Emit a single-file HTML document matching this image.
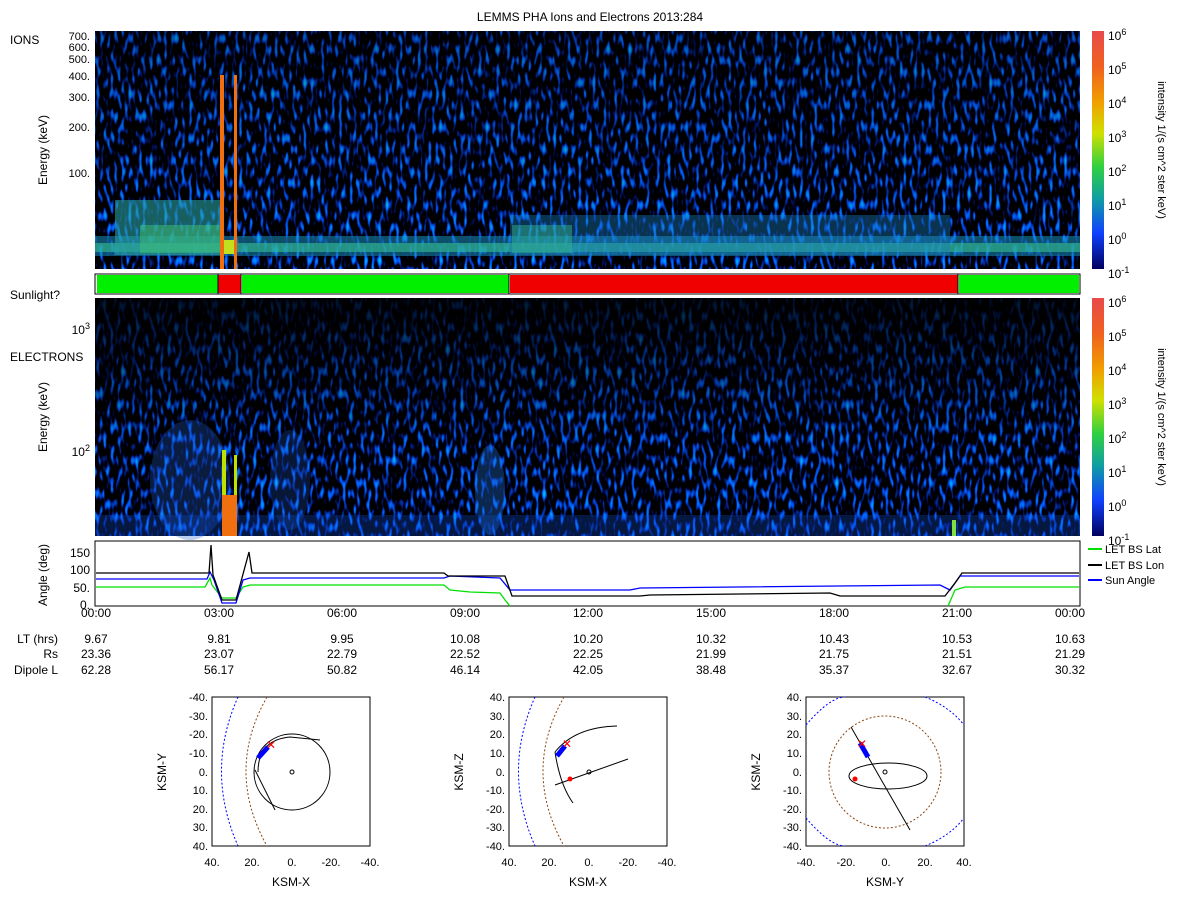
<!DOCTYPE html><html><head><style>
body{margin:0;background:#fff;width:1200px;height:900px;overflow:hidden;font-family:"Liberation Sans",sans-serif}
svg text{font-family:"Liberation Sans",sans-serif;fill:#000}
</style></head><body>
<svg width="1200" height="900" xmlns="http://www.w3.org/2000/svg">
<defs>
<filter id="nz" x="0" y="0" width="100%" height="100%" color-interpolation-filters="sRGB">
<feTurbulence type="fractalNoise" baseFrequency="0.28 0.09" numOctaves="1" seed="3"/>
<feColorMatrix type="matrix" values="0 0 0 0 0  2.5 0 0 0 -1.3  6 0 0 0 -2.95  0 0 0 0 1"/>
</filter>
<filter id="nz2" x="0" y="0" width="100%" height="100%" color-interpolation-filters="sRGB">
<feTurbulence type="fractalNoise" baseFrequency="0.28 0.09" numOctaves="1" seed="7"/>
<feColorMatrix type="matrix" values="0 0 0 0 0  2.5 0 0 0 -1.3  6 0 0 0 -2.95  0 0 0 0 1"/>
</filter>
<linearGradient id="cb" x1="0" y1="0" x2="0" y2="1">
<stop offset="0" stop-color="#e84a4a"/><stop offset="0.15" stop-color="#f06020"/><stop offset="0.3" stop-color="#f0a000"/><stop offset="0.43" stop-color="#d0e000"/><stop offset="0.57" stop-color="#30d040"/><stop offset="0.7" stop-color="#10a0a0"/><stop offset="0.85" stop-color="#1040ff"/><stop offset="1" stop-color="#000060"/>
</linearGradient>
<linearGradient id="eb" x1="0" y1="0" x2="0" y2="1">
<stop offset="0" stop-color="#000" stop-opacity="0.85"/><stop offset="0.3" stop-color="#000" stop-opacity="0.45"/><stop offset="0.6" stop-color="#000" stop-opacity="0.1"/><stop offset="1" stop-color="#000" stop-opacity="0"/>
</linearGradient>
<linearGradient id="ib" x1="0" y1="0" x2="0" y2="1">
<stop offset="0" stop-color="#000" stop-opacity="0.3"/><stop offset="1" stop-color="#000" stop-opacity="0"/>
</linearGradient>
</defs>
<text x="590" y="21" font-size="12" text-anchor="middle">LEMMS PHA Ions and Electrons  2013:284</text>
<rect x="95" y="31" width="985" height="238" fill="#000"/>
<rect x="95" y="31" width="985" height="238" filter="url(#nz)"/>
<rect x="95" y="31" width="985" height="238" fill="url(#ib)"/>
<rect x="95" y="236" width="985" height="20" fill="#1890c0" opacity="0.55"/>
<rect x="95" y="243" width="985" height="9" fill="#30b090" opacity="0.7"/>
<rect x="115" y="200" width="105" height="55" fill="#28a0a0" opacity="0.6"/>
<rect x="140" y="225" width="80" height="28" fill="#40c070" opacity="0.5"/>
<rect x="510" y="215" width="440" height="40" fill="#1a80c0" opacity="0.4"/>
<rect x="512" y="225" width="60" height="28" fill="#30b090" opacity="0.5"/>
<rect x="220" y="75" width="4" height="194" fill="#f07010"/>
<rect x="234" y="75" width="3" height="194" fill="#f07010"/>
<rect x="224" y="240" width="10" height="14" fill="#c0e020"/>
<rect x="1092" y="31" width="12" height="238" fill="url(#cb)"/>
<rect x="95" y="274" width="985" height="20" fill="#fff" stroke="#000"/>
<rect x="97" y="275" width="121" height="18" fill="#00f000"/>
<rect x="218" y="275" width="23" height="18" fill="#f00000"/>
<rect x="242" y="275" width="267" height="18" fill="#00f000"/>
<rect x="510" y="275" width="448" height="18" fill="#f00000"/>
<rect x="959" y="275" width="120" height="18" fill="#00f000"/>
<line x1="218" y1="274" x2="218" y2="294" stroke="#000"/><line x1="241" y1="274" x2="241" y2="294" stroke="#000"/><line x1="509" y1="274" x2="509" y2="294" stroke="#000"/><line x1="958" y1="274" x2="958" y2="294" stroke="#000"/>
<rect x="95" y="298" width="985" height="238" fill="#000"/>
<rect x="95" y="298" width="985" height="238" filter="url(#nz2)"/>
<rect x="95" y="298" width="985" height="238" fill="url(#eb)"/>
<ellipse cx="190" cy="480" rx="40" ry="60" fill="#2060d0" opacity="0.3"/>
<ellipse cx="290" cy="480" rx="20" ry="50" fill="#2060d0" opacity="0.25"/>
<ellipse cx="490" cy="490" rx="15" ry="45" fill="#2070d0" opacity="0.35"/>
<rect x="95" y="515" width="985" height="21" fill="#1050d0" opacity="0.3"/>
<rect x="222" y="450" width="4" height="86" fill="#c0e000"/>
<rect x="234" y="455" width="3" height="81" fill="#c0e000"/>
<rect x="222" y="495" width="15" height="41" fill="#f07010"/>
<rect x="952" y="520" width="4" height="16" fill="#80e040"/>
<rect x="1092" y="298" width="12" height="238" fill="url(#cb)"/>
<g font-size="12">
<text x="1108" y="40">10<tspan font-size="9" dy="-5">6</tspan></text>
<text x="1108" y="74">10<tspan font-size="9" dy="-5">5</tspan></text>
<text x="1108" y="108">10<tspan font-size="9" dy="-5">4</tspan></text>
<text x="1108" y="142">10<tspan font-size="9" dy="-5">3</tspan></text>
<text x="1108" y="176">10<tspan font-size="9" dy="-5">2</tspan></text>
<text x="1108" y="210">10<tspan font-size="9" dy="-5">1</tspan></text>
<text x="1108" y="244">10<tspan font-size="9" dy="-5">0</tspan></text>
<text x="1108" y="278">10<tspan font-size="9" dy="-5">-1</tspan></text>
<text x="1108" y="307">10<tspan font-size="9" dy="-5">6</tspan></text>
<text x="1108" y="341">10<tspan font-size="9" dy="-5">5</tspan></text>
<text x="1108" y="375">10<tspan font-size="9" dy="-5">4</tspan></text>
<text x="1108" y="409">10<tspan font-size="9" dy="-5">3</tspan></text>
<text x="1108" y="443">10<tspan font-size="9" dy="-5">2</tspan></text>
<text x="1108" y="477">10<tspan font-size="9" dy="-5">1</tspan></text>
<text x="1108" y="511">10<tspan font-size="9" dy="-5">0</tspan></text>
<text x="1108" y="545">10<tspan font-size="9" dy="-5">-1</tspan></text>
</g>
<text transform="translate(1158,150) rotate(90)" font-size="11" text-anchor="middle">intensity 1/(s cm^2 ster keV)</text>
<text transform="translate(1158,417) rotate(90)" font-size="11" text-anchor="middle">intensity 1/(s cm^2 ster keV)</text>
<g font-size="12">
<text x="10" y="44">IONS</text>
<g font-size="11">
<text x="90" y="40" text-anchor="end">700.</text>
<text x="90" y="51" text-anchor="end">600.</text>
<text x="90" y="63" text-anchor="end">500.</text>
<text x="90" y="80" text-anchor="end">400.</text>
<text x="90" y="101" text-anchor="end">300.</text>
<text x="90" y="131" text-anchor="end">200.</text>
<text x="90" y="177" text-anchor="end">100.</text>
</g>
<text transform="translate(47,150) rotate(-90)" text-anchor="middle">Energy (keV)</text>
<text x="10" y="299">Sunlight?</text>
<text x="10" y="361">ELECTRONS</text>
<text x="90" y="334" text-anchor="end">10<tspan font-size="9" dy="-5">3</tspan></text>
<text x="90" y="456" text-anchor="end">10<tspan font-size="9" dy="-5">2</tspan></text>
<text transform="translate(47,417) rotate(-90)" text-anchor="middle">Energy (keV)</text>
</g>
<rect x="95" y="541" width="985" height="65" fill="#fff" stroke="#000"/>
<g font-size="12">
<text x="90" y="557" text-anchor="end">150</text>
<text x="90" y="574" text-anchor="end">100</text>
<text x="90" y="592" text-anchor="end">50.</text>
<text x="90" y="609" text-anchor="end">0.</text>
<text transform="translate(47,575) rotate(-90)" text-anchor="middle">Angle (deg)</text>
</g>
<g fill="none" stroke-width="1.3">
<polyline stroke="#00e000" points="96,587 205,587 210,578 212,585 222,598 236,598 243,587 250,585 444,585 450,590 470,592 500,593 505,600 510,606"/>
<polyline stroke="#00e000" points="948,606 955,590 965,587 1079,587"/>
<polyline stroke="#0000ff" points="96,579 207,579 210,572 214,580 222,603 236,603 243,580 250,578 444,578 450,576 500,578 510,590 630,590 640,588 940,585 950,590 960,576 1079,576"/>
<polyline stroke="#000" points="96,573 209,573 211,545 213,575 222,600 236,600 249,552 252,573 444,573 448,576 505,576 512,596 640,596 650,595 830,593 840,596 945,596 955,583 962,573 1079,573"/>
</g>
<line x1="1088" y1="549" x2="1102" y2="549" stroke="#00e000" stroke-width="2"/><text x="1105" y="553" font-size="11">LET BS Lat</text>
<line x1="1088" y1="565" x2="1102" y2="565" stroke="#000" stroke-width="2"/><text x="1105" y="569" font-size="11">LET BS Lon</text>
<line x1="1088" y1="580" x2="1102" y2="580" stroke="#00f" stroke-width="2"/><text x="1105" y="584" font-size="11">Sun Angle</text>
<g font-size="12" text-anchor="middle">
<text x="96" y="617">00:00</text><text x="219" y="617">03:00</text><text x="342" y="617">06:00</text><text x="465" y="617">09:00</text><text x="588" y="617">12:00</text><text x="711" y="617">15:00</text><text x="834" y="617">18:00</text><text x="957" y="617">21:00</text><text x="1070" y="617">00:00</text>
<text x="96" y="643">9.67</text><text x="219" y="643">9.81</text><text x="342" y="643">9.95</text><text x="465" y="643">10.08</text><text x="588" y="643">10.20</text><text x="711" y="643">10.32</text><text x="834" y="643">10.43</text><text x="957" y="643">10.53</text><text x="1070" y="643">10.63</text>
<text x="96" y="658">23.36</text><text x="219" y="658">23.07</text><text x="342" y="658">22.79</text><text x="465" y="658">22.52</text><text x="588" y="658">22.25</text><text x="711" y="658">21.99</text><text x="834" y="658">21.75</text><text x="957" y="658">21.51</text><text x="1070" y="658">21.29</text>
<text x="96" y="674">62.28</text><text x="219" y="674">56.17</text><text x="342" y="674">50.82</text><text x="465" y="674">46.14</text><text x="588" y="674">42.05</text><text x="711" y="674">38.48</text><text x="834" y="674">35.37</text><text x="957" y="674">32.67</text><text x="1070" y="674">30.32</text>
</g>
<g font-size="12" text-anchor="end">
<text x="58" y="643">LT (hrs)</text><text x="58" y="658">Rs</text><text x="58" y="674">Dipole L</text>
</g>
<g font-size="11">
<rect x="212" y="697" width="158" height="149" fill="#fff" stroke="#000"/>
<path d="M238,697 Q205,771 238,846" fill="none" stroke="#00f" stroke-dasharray="2,2"/>
<path d="M267,697 Q225,771 267,846" fill="none" stroke="#8b4513" stroke-dasharray="2,2"/>
<circle cx="292" cy="772" r="38" fill="none" stroke="#000"/>
<path d="M258,772 Q258,740 290,737 L320,740" fill="none" stroke="#000"/>
<path d="M255,770 L275,810" fill="none" stroke="#000"/>
<circle cx="292" cy="772" r="2" fill="none" stroke="#000"/>
<path d="M258,758 L268,747" stroke="#00f" stroke-width="5"/>
<text x="271" y="749" font-size="12" text-anchor="middle" style="fill:#f00">✕</text>
</g>
<g font-size="11" text-anchor="end">
<text x="208" y="701">-40.</text><text x="208" y="720">-30.</text><text x="208" y="738">-20.</text><text x="208" y="757">-10.</text><text x="208" y="776">0.</text><text x="208" y="794">10.</text><text x="208" y="813">20.</text><text x="208" y="831">30.</text><text x="208" y="850">40.</text>
<text x="505" y="701">40.</text><text x="505" y="720">30.</text><text x="505" y="738">20.</text><text x="505" y="757">10.</text><text x="505" y="776">0.</text><text x="505" y="794">-10.</text><text x="505" y="813">-20.</text><text x="505" y="831">-30.</text><text x="505" y="850">-40.</text>
<text x="802" y="701">40.</text><text x="802" y="720">30.</text><text x="802" y="738">20.</text><text x="802" y="757">10.</text><text x="802" y="776">0.</text><text x="802" y="794">-10.</text><text x="802" y="813">-20.</text><text x="802" y="831">-30.</text><text x="802" y="850">-40.</text>
</g>
<g font-size="11" text-anchor="middle">
<text x="212" y="866">40.</text><text x="252" y="866">20.</text><text x="292" y="866">0.</text><text x="331" y="866">-20.</text><text x="370" y="866">-40.</text>
<text x="509" y="866">40.</text><text x="549" y="866">20.</text><text x="589" y="866">0.</text><text x="628" y="866">-20.</text><text x="667" y="866">-40.</text>
<text x="806" y="866">-40.</text><text x="846" y="866">-20.</text><text x="886" y="866">0.</text><text x="925" y="866">20.</text><text x="964" y="866">40.</text>
<text x="291" y="886" font-size="12">KSM-X</text><text x="588" y="886" font-size="12">KSM-X</text><text x="885" y="886" font-size="12">KSM-Y</text>
</g>
<text transform="translate(166,772) rotate(-90)" font-size="12" text-anchor="middle">KSM-Y</text>
<text transform="translate(463,772) rotate(-90)" font-size="12" text-anchor="middle">KSM-Z</text>
<text transform="translate(760,772) rotate(-90)" font-size="12" text-anchor="middle">KSM-Z</text>
<rect x="509" y="697" width="158" height="149" fill="#fff" stroke="#000"/>
<path d="M535,697 Q502,771 535,846" fill="none" stroke="#00f" stroke-dasharray="2,2"/>
<path d="M564,697 Q522,771 564,846" fill="none" stroke="#8b4513" stroke-dasharray="2,2"/>
<path d="M555,752 Q575,727 617,726" fill="none" stroke="#000"/>
<path d="M555,785 L628,759" fill="none" stroke="#000"/>
<path d="M555,752 Q560,785 573,803" fill="none" stroke="#000"/>
<circle cx="589" cy="772" r="2" fill="none" stroke="#000"/>
<path d="M557,756 L565,746" stroke="#00f" stroke-width="5"/>
<text x="567" y="748" font-size="12" text-anchor="middle" style="fill:#f00">✕</text>
<circle cx="570" cy="779" r="2.5" fill="#f00"/>
<rect x="806" y="697" width="158" height="149" fill="#fff" stroke="#000"/>
<path d="M806,725 Q830,697 845,697 M925,697 Q950,707 964,725 M806,818 Q830,846 845,846 M925,846 Q950,836 964,818" fill="none" stroke="#00f" stroke-dasharray="2,2"/>
<circle cx="885" cy="772" r="56" fill="none" stroke="#8b4513" stroke-dasharray="2,2"/>
<ellipse cx="888" cy="776" rx="39" ry="13" fill="none" stroke="#000"/>
<path d="M851,727 L910,830" fill="none" stroke="#000"/>
<circle cx="885" cy="772" r="2" fill="none" stroke="#000"/>
<path d="M860,743 L868,757" stroke="#00f" stroke-width="5"/>
<text x="862" y="748" font-size="12" text-anchor="middle" style="fill:#f00">✕</text>
<circle cx="855" cy="779" r="2.5" fill="#f00"/>
</svg>
</body></html>
